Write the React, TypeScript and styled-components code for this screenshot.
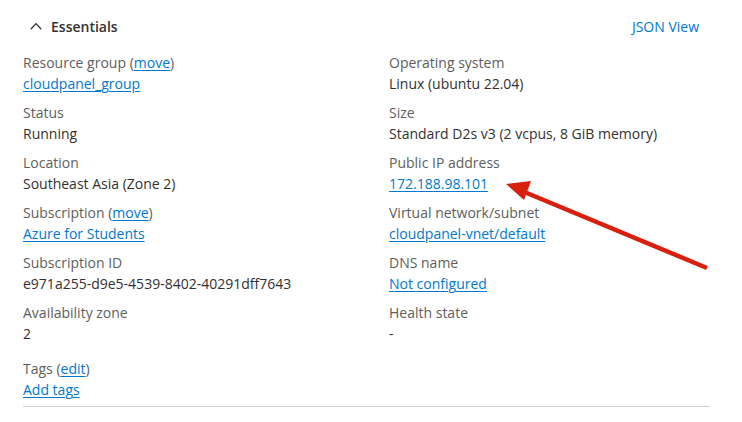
import React from "react";
import styled, { createGlobalStyle } from "styled-components";

const Global = createGlobalStyle`
  html, body { margin: 0; padding: 0; background: #ffffff; }
  body { font-family: "Open Sans", "Noto Sans", sans-serif; }
`;

const Page = styled.div`
  position: relative;
  width: 742px;
  height: 422px;
  box-sizing: border-box;
  padding: 16px 32px 0 23px;
  background: #fff;
`;

const Header = styled.div`
  display: flex;
  align-items: center;
  justify-content: space-between;
  height: 20px;
  margin-bottom: 16px;
`;

const Toggle = styled.div`
  display: flex;
  align-items: center;
  gap: 9px;
  padding-left: 7px;
  font-size: 14px;
  font-weight: 600;
  color: #323130;
`;

const HeaderLink = styled.a`
  color: #0078d4;
  font-size: 14px;
  text-decoration: none;
  margin-right: 11px;
`;

const Grid = styled.div`
  display: grid;
  grid-template-columns: 366px 1fr;
  row-gap: 8px;
`;

const Field = styled.div<{ $extraTop?: number }>`
  display: flex;
  flex-direction: column;
  font-size: 14px;
  line-height: 21px;
  margin-top: ${(p) => p.$extraTop ?? 0}px;
`;

const Label = styled.span`
  color: #605e5c;
  white-space: nowrap;
`;

const Value = styled.span`
  color: #323130;
  white-space: nowrap;
`;

const Link = styled.a`
  color: #0078d4;
  text-decoration: underline;
  text-underline-offset: 2px;
  white-space: nowrap;
`;

const Divider = styled.hr`
  border: none;
  border-top: 1px solid #d0d0d0;
  margin: 6px 0 0 0;
`;

const Arrow = styled.svg`
  position: absolute;
  left: 0;
  top: 0;
  pointer-events: none;
`;

type Item = { label: React.ReactNode; value: React.ReactNode };

const items: Item[] = [
  { label: <>Resource group (<Link>move</Link>)</>, value: <Link>cloudpanel_group</Link> },
  { label: "Operating system", value: <Value>Linux (ubuntu 22.04)</Value> },
  { label: "Status", value: <Value>Running</Value> },
  { label: "Size", value: <Value>Standard D2s v3 (2 vcpus, 8 GiB memory)</Value> },
  { label: "Location", value: <Value>Southeast Asia (Zone 2)</Value> },
  { label: "Public IP address", value: <Link>172.188.98.101</Link> },
  { label: <>Subscription (<Link>move</Link>)</>, value: <Link>Azure for Students</Link> },
  { label: "Virtual network/subnet", value: <Link>cloudpanel-vnet/default</Link> },
  { label: "Subscription ID", value: <Value>e971a255-d9e5-4539-8402-40291dff7643</Value> },
  { label: "DNS name", value: <Link>Not configured</Link> },
  { label: "Availability zone", value: <Value>2</Value> },
  { label: "Health state", value: <Value>-</Value> },
];

export default function App() {
  return (
    <>
      <Global />
      <Page>
        <Header>
          <Toggle>
            <svg width="12" height="8" viewBox="0 0 12 8">
              <path d="M0.8 7.2 L6 1.6 L11.2 7.2" fill="none" stroke="#323130" strokeWidth="1.3" />
            </svg>
            Essentials
          </Toggle>
          <HeaderLink>JSON View</HeaderLink>
        </Header>
        <Grid>
          {items.map((it, i) => (
            <Field key={i}>
              <Label>{it.label}</Label>
              {it.value}
            </Field>
          ))}
          <Field $extraTop={6}>
            <Label>
              Tags (<Link>edit</Link>)
            </Label>
            <Link>Add tags</Link>
          </Field>
        </Grid>
        <Divider />
        <Arrow width="742" height="422" viewBox="0 0 742 422">
          <line x1="707" y1="268" x2="522" y2="191" stroke="#d9200f" strokeWidth="4.5" strokeLinecap="butt" />
          <polygon points="506,184 531,181 524,200" fill="#d9200f" />
        </Arrow>
      </Page>
    </>
  );
}
